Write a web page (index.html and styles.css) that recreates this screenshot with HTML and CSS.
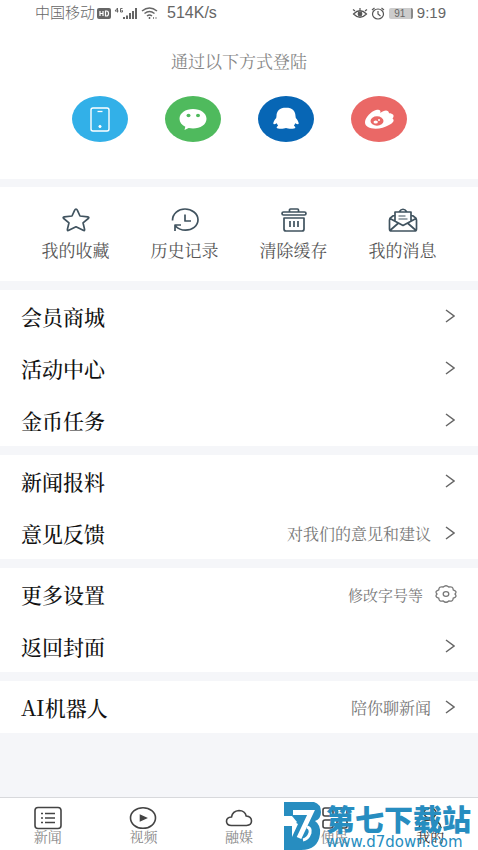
FILE: index.html
```html
<!DOCTYPE html>
<html lang="zh-CN">
<head>
<meta charset="utf-8">
<meta name="viewport" content="width=device-width, initial-scale=1">
<title>我的</title>
<link rel="stylesheet" href="styles.css">
</head>
<body>
<div class="app">
  <header class="status">
    <div class="status-side">
      <span class="carrier">中国移动</span>
      <svg width="14" height="11" viewBox="0 0 14 11"><rect width="14" height="11" rx="2" fill="#666"/><path d="M3 3v5M6 3v5M3 5.500h3M8.500 3v5h1q2 0 2-2.500t-2-2.500z" fill="none" stroke="#fff" stroke-width="1.200"/></svg>
      <svg class="signal" width="24" height="13" viewBox="0 0 24 13" fill="none" stroke="#666"><path d="M3.500 5.500V1L1 4h3.500M8.500 1.500h-2v3.500h2V3.500h-1" stroke-width="1"/><path d="M10 12v-2M13 12V8.500M16 12V6M19 12V4M22 12V1" stroke-width="2"/></svg>
      <svg width="17" height="12" viewBox="0 0 17 12" fill="none" stroke="#666" stroke-width="1.500"><path d="M1 4q7.500-6 15 0M3.500 6.500q5-4 10 0M6 9q2.500-2 5 0"/><path d="M8.500 10v2M12 11h1M14.500 11h1"/></svg>
      <span class="speed">514K/s</span>
    </div>
    <div class="status-side">
      <svg width="16" height="12" viewBox="0 0 16 12" fill="none" stroke="#555" stroke-width="1.200"><path d="M1.500 7q6.500-6.500 13 0-6.500 6.500-13 0zM3 4L1 2.500M8 3V1M13 4l2-1.500"/><circle cx="8" cy="7" r="1.800" fill="#555"/></svg>
      <svg width="14" height="13" viewBox="0 0 14 13" fill="none" stroke="#555" stroke-width="1.200"><ellipse cx="7" cy="7" rx="5.500" ry="5"/><path d="M7 4v3l2.500 2M1 3l2.500-2M13 3l-2.500-2"/></svg>
      <span class="battery">91</span>
      <span>9:19</span>
    </div>
  </header>

  <section class="login">
    <h1>通过以下方式登陆</h1>
    <div class="providers">
      <button class="provider phone" aria-label="手机"><svg width="56" height="46" viewBox="0 0 56 46" fill="none" stroke="#fff"><rect x="19" y="12" width="18" height="23" rx="2" stroke-width="1.400"/><path d="M25.500 15.500h5" stroke-width="1.300"/><circle cx="28" cy="30.500" r="1.200" fill="#fff" stroke-width=".7"/></svg></button>
      <button class="provider wechat" aria-label="微信"><svg width="56" height="46" viewBox="0 0 56 46"><path d="M28 13c7.500 0 13.500 4 13.500 9.800S35.500 32.600 28 32.600c-1.500 0-3-.2-4.300-.5L19.500 34l.8-3.200c-3.500-1.700-5.800-4.600-5.800-8C14.500 17 20.500 13 28 13z" fill="#fff"/><ellipse cx="23.500" cy="19.500" rx="2" ry="1.700" fill="#4fba5d"/><ellipse cx="33" cy="19.500" rx="2" ry="1.700" fill="#4fba5d"/></svg></button>
      <button class="provider qq" aria-label="QQ"><svg width="56" height="46" viewBox="0 0 56 46"><path d="M28 11.500c-6.500 0-9.500 4-9.500 8.500l-.3 2c-1.500 1.600-2.900 4-2.900 5.300 0 1.300 1.300 1 3.500 0 .3 1 .7 1.800 1.300 2.500-1 .7-1.600 1.300-1.400 2 .5 1.300 7.300 1.200 9.300.2 2 1 8.800 1.100 9.300-.2.200-.7-.4-1.300-1.400-2 .6-.7 1-1.500 1.300-2.500 2.200 1 3.500 1.300 3.500 0 0-1.300-1.400-3.700-2.900-5.300l-.3-2c0-4.500-3-8.500-9.500-8.500z" fill="#fff"/></svg></button>
      <button class="provider weibo" aria-label="微博"><svg width="56" height="46" viewBox="0 0 56 46"><path d="M14 26c.5-5 6-10.500 11-12 4-1 5 .8 4.300 3 3.500-3 8.500-3.500 8.700.2 4 0 6 2.300 3.500 5.300 2.500 1.700.6 4.600-3.500 6.500C29.500 34.500 13.500 34 14 26z" fill="#fff"/><ellipse cx="26" cy="25" rx="6.500" ry="4.700" fill="#ea6866"/><ellipse cx="24.700" cy="26" rx="2.200" ry="1.500" fill="#fff"/><circle cx="28" cy="24" r="1" fill="#fff"/></svg></button>
    </div>
  </section>

  <nav class="shortcuts">
    <a href="#"><svg width="30" height="26" viewBox="0 0 30 26"><path d="M15 2q.8 0 1.300 1.200L19 9l7.800.9q1.800.3.500 1.600L22 15.800l1.600 6.600q.2 1.700-1.400.9L15 19.800l-7.200 3.500q-1.600.8-1.400-.9L8 15.800l-5.300-4.300Q1.400 10.200 3.200 9.900L11 9l2.700-5.800Q14.200 2 15 2z"/></svg><span>我的收藏</span></a>
    <a href="#"><svg width="30" height="26" viewBox="0 0 30 26"><path d="M2.500 13.500C2.500 6.500 8.500 2 15 2s13 4.500 13 10.800-6 10.400-12.500 10.400c-4 0-7.500-1.500-10-4.200M5 24V18h6M15 7.500V14h6"/></svg><span>历史记录</span></a>
    <a href="#"><svg width="30" height="26" viewBox="0 0 30 26"><rect x="3" y="5" width="24" height="3" rx="1.500"/><path d="M10.500 5V3q0-1 1-1h7q1 0 1 1v2M5 11h20v11q0 2-2 2H7q-2 0-2-2zM11 14v6M15 14v6M19 14v6"/></svg><span>清除缓存</span></a>
    <a href="#"><svg width="30" height="26" viewBox="0 0 30 26"><path d="M7 7.500L3.500 10q-2 1-2 3v9q0 2 2 2h23q2 0 2-2v-9q0-2-2-3L23 7.500M7 14.500V5h16v9.500M2 11.500l13 7 13-7M2.500 23l8-7M27.500 23l-8-7M11 5q4-5.500 8 0"/><path d="M10.500 9h7M10.500 12h9" stroke-width="1.200"/></svg><span>我的消息</span></a>
  </nav>

  <main class="groups">
    <section class="group">
      <a class="row" href="#"><span class="name">会员商城</span><svg class="arrow" viewBox="0 0 10 14"><path d="M1 1l8 6-8 6"/></svg></a>
      <a class="row" href="#"><span class="name">活动中心</span><svg class="arrow" viewBox="0 0 10 14"><path d="M1 1l8 6-8 6"/></svg></a>
      <a class="row" href="#"><span class="name">金币任务</span><svg class="arrow" viewBox="0 0 10 14"><path d="M1 1l8 6-8 6"/></svg></a>
    </section>
    <section class="group">
      <a class="row" href="#"><span class="name">新闻报料</span><svg class="arrow" viewBox="0 0 10 14"><path d="M1 1l8 6-8 6"/></svg></a>
      <a class="row" href="#"><span class="name">意见反馈</span><span class="hint">对我们的意见和建议</span><svg class="arrow" viewBox="0 0 10 14"><path d="M1 1l8 6-8 6"/></svg></a>
    </section>
    <section class="group">
      <a class="row" href="#"><span class="name">更多设置</span><span class="hint small">修改字号等</span><svg class="gear" viewBox="0 0 22 18"><path d="M8.200 2Q11-.6 13.800 2Q18.200 1.200 18.200 4.800Q22.600 6.300 20 9Q22.600 11.700 18.200 13.200Q18.200 16.800 13.800 16Q11 18.600 8.200 16Q3.800 16.800 3.800 13.200Q-.6 11.700 2 9Q-.6 6.300 3.800 4.800Q3.800 1.200 8.200 2z"/><ellipse cx="11" cy="9" rx="2.800" ry="2.300"/></svg></a>
      <a class="row" href="#"><span class="name">返回封面</span><svg class="arrow" viewBox="0 0 10 14"><path d="M1 1l8 6-8 6"/></svg></a>
    </section>
    <section class="group">
      <a class="row" href="#"><span class="name">AI机器人</span><span class="hint">陪你聊新闻</span><svg class="arrow" viewBox="0 0 10 14"><path d="M1 1l8 6-8 6"/></svg></a>
    </section>
  </main>

  <nav class="tabs">
    <a href="#"><svg width="28" height="24" viewBox="0 0 28 24"><rect x="1" y="1.500" width="26" height="21" rx="3"/><path d="M11 7.500h10M11 12h10M11 16.500h10M7 7.500h2M7 12h2M7 16.500h2"/></svg><span>新闻</span></a>
    <a href="#"><svg width="28" height="24" viewBox="0 0 28 24"><ellipse cx="14" cy="12" rx="12.500" ry="10.300"/><path d="M11.500 9.500l5.500 2.500-5.500 2.500z" fill="#444"/></svg><span>视频</span></a>
    <a href="#"><svg width="28" height="24" viewBox="0 0 28 24"><path d="M6.500 19.500q-5-.3-5-4.300 0-3.700 5-4.200 1-6 7.500-6.500 6 .2 7.200 5.500 5.300.5 5.300 5 0 4.200-5 4.500z"/></svg><span>融媒</span></a>
    <a href="#"><svg width="28" height="24" viewBox="0 0 28 24"><rect x="2" y="2" width="10" height="8" rx="2"/><rect x="16" y="2" width="10" height="8" rx="2"/><rect x="2" y="14" width="10" height="8" rx="2"/><rect x="16" y="14" width="10" height="8" rx="2"/></svg><span>便民</span></a>
    <a href="#" class="current"><svg width="28" height="24" viewBox="0 0 28 24"><ellipse cx="14" cy="7" rx="6" ry="5"/><path d="M3 22q1-8 11-8t11 8"/></svg><span>我的</span></a>
  </nav>

  <aside class="watermark">
    <svg width="40" height="48" viewBox="0 0 40 48"><path d="M0 0h30q7 2 7 10 0 7-6 9 6 4 5 13-2 16-19 16H0V24h8v11l6-13-14-8z" fill="#278dc0"/><path d="M0 14h8l5 6-4 4H0z" fill="#fff"/><path d="M9 10.500h18L15 36" fill="none" stroke="#fff" stroke-width="5"/><path d="M23 25q4 1 3 6-2 6-7 7" fill="none" stroke="#fff" stroke-width="3"/></svg>
    <div><strong>第七下载站</strong><span>www.d7down.com</span></div>
  </aside>
</div>
</body>
</html>
```
FILE: styles.css
```css
* { box-sizing: border-box; }

body {
  margin: 0;
  background: #f5f6f9;
  font-family: "Liberation Serif", "Noto Serif CJK SC", "Noto Sans CJK SC", serif;
  font-weight: 400;
}

a { color: inherit; text-decoration: none; }
svg { display: block; flex: none; }

.app {
  position: relative;
  display: flex;
  flex-direction: column;
  min-height: 100vh;
  overflow: hidden;
}

.status {
  display: flex;
  justify-content: space-between;
  height: 28px;
  padding: 0 32px 0 35px;
  background: #fff;
  color: #666;
  font: 15px/26px "Liberation Sans", "Noto Sans CJK SC", sans-serif;
}
.status-side { display: flex; align-items: center; gap: 4px; height: 26px; }
.status-side svg + svg { margin-left: -1px; }
.carrier { font-weight: 300; }
.carrier + svg { margin-left: -2px; }
.speed { margin-left: 5px; font-size: 16px; }
.battery {
  width: 24px;
  height: 11px;
  border-right: 2px solid #888;
  border-radius: 2px;
  background: #ccc;
  font-size: 10px;
  line-height: 11px;
  text-align: center;
}

.login {
  height: 151px;
  padding-top: 23px;
  background: #fff;
}
.login h1 {
  margin: 0 0 21px;
  color: #888;
  font-size: 17px;
  font-weight: 400;
  line-height: 24px;
  text-align: center;
}
.providers { display: flex; justify-content: center; gap: 37px; }
.provider {
  width: 56px;
  height: 46px;
  padding: 0;
  border: 0;
  border-radius: 50%;
}
.phone { background: #32b0e8; }
.wechat { background: #4fba5d; }
.qq { background: #0766b5; }
.weibo { background: #ea6866; }

.shortcuts {
  display: grid;
  grid-template-columns: repeat(4, 1fr);
  height: 94px;
  margin: 8px 0 9px;
  padding: 20px 21px 0;
  background: #fff;
}
.shortcuts a {
  display: flex;
  flex-direction: column;
  align-items: center;
  gap: 7px;
  color: #555;
  font-size: 17px;
  line-height: 24px;
}
.shortcuts svg { fill: none; stroke: #40535f; stroke-width: 1.7; stroke-linejoin: round; }

.groups { display: flex; flex-direction: column; gap: 9px; }
.group { background: #fff; }
.row {
  display: flex;
  align-items: center;
  height: 52px;
  padding: 0 21px;
}
.name {
  margin-right: auto;
  color: #111;
  font-family: "Noto Serif CJK SC", "DejaVu Serif", "Noto Sans CJK SC", serif;
  font-size: 21px;
  font-weight: 500;
  line-height: 30px;
}
.hint { margin-right: 14px; color: #777; font-size: 16px; }
.hint.small { margin-right: 12px; font-size: 15px; }
.arrow { width: 10px; height: 14px; margin-right: 2px; fill: none; stroke: #666; stroke-width: 1.5; }
.gear { width: 22px; height: 18px; fill: none; stroke: #777; stroke-width: 1.3; }

.tabs {
  display: grid;
  grid-template-columns: repeat(5, 1fr);
  height: 53px;
  margin-top: auto;
  padding-top: 8px;
  border-top: 1px solid #d8d9dc;
  background: #fff;
}
.tabs a {
  display: flex;
  flex-direction: column;
  align-items: center;
  color: #888;
  font-size: 14px;
  line-height: 16px;
}
.tabs svg { fill: none; stroke: #444; stroke-width: 1.6; }
.tabs .current { color: #333; }

.watermark {
  position: absolute;
  right: 7px;
  bottom: 0;
  display: flex;
  gap: 2px;
  color: #278dc0;
  pointer-events: none;
}
.watermark div { display: flex; flex-direction: column; }
.watermark strong { font: 900 29px/32px "Noto Sans CJK SC", sans-serif; }
.watermark span { font: 15px/16px "DejaVu Sans", sans-serif; }
```
